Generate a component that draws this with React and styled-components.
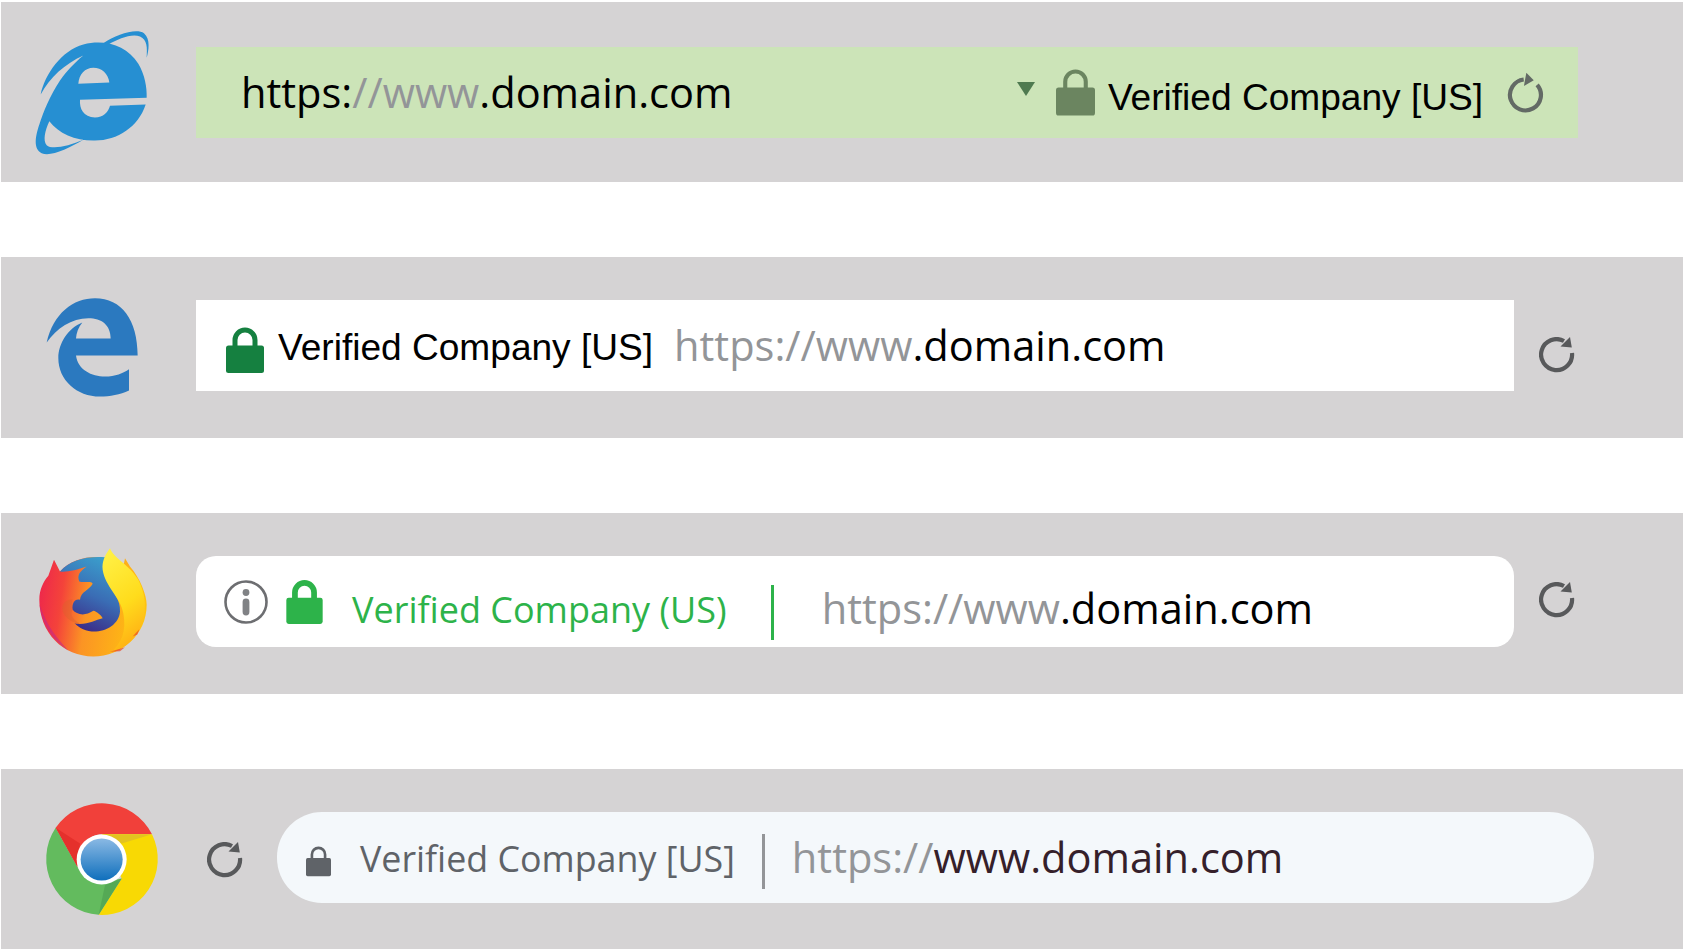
import React from 'react';
import styled, { createGlobalStyle } from 'styled-components';

const GlobalStyle = createGlobalStyle`
  html, body { margin: 0; padding: 0; background: #fff; }
`;

const Page = styled.div`
  display: flex;
  flex-direction: column;
  gap: 75px;
  padding: 1.7px 0 0 1px;
  height: 950px;
  box-sizing: border-box;
  overflow: hidden;
`;

const Bar = styled.div`
  display: flex;
  align-items: flex-start;
  box-sizing: border-box;
  height: 180.7px;
  flex: none;
  padding-top: ${p => p.$top}px;
  background: #d5d3d4;
`;

const LogoBox = styled.svg`
  display: block;
  flex: none;
  align-self: center;
  width: 195px;
  height: 181px;
  margin-top: ${p => -p.$top}px;
`;

const Field = styled.div`
  display: flex;
  align-items: center;
  flex: none;
  box-sizing: border-box;
  height: 91px;
  width: ${p => p.$width}px;
  padding-left: ${p => p.$pad}px;
  background: ${p => p.$bg};
  border-radius: ${p => p.$radius || 0}px;
`;

// $drop moves a centred item down by half its value
const Url = styled.span`
  font: 400 41.55px/1 "Open Sans", sans-serif;
  white-space: nowrap;
  color: ${p => p.$color || '#000'};
  margin-left: ${p => p.$left || 0}px;
  margin-top: ${p => p.$drop || 0}px;
`;

const Dim = styled.span`
  color: #939598;
`;

const Company = styled.span`
  font: 400 37.1px/1 "Liberation Sans", Arial, sans-serif;
  white-space: nowrap;
  color: #000;
  margin-left: ${p => p.$left || 0}px;
  margin-top: ${p => p.$drop || 0}px;
`;

const CompanySoft = styled.span`
  font: 400 ${p => p.$size}px/1 "Open Sans", sans-serif;
  white-space: nowrap;
  color: ${p => p.$color};
  margin-left: ${p => p.$left || 0}px;
  margin-top: ${p => p.$drop || 0}px;
`;

const Divider = styled.span`
  flex: none;
  width: 3px;
  height: 55px;
  margin-left: ${p => p.$left}px;
  margin-top: ${p => p.$drop || 0}px;
  background: ${p => p.$color};
`;

const Caret = styled.span`
  flex: none;
  width: 0;
  height: 0;
  margin-left: auto;
  margin-bottom: 8px;
  margin-top: 2px;
  border-style: solid;
  border-width: 14px 9px 0 9px;
  border-color: #4f7a50 transparent transparent transparent;
`;

const IconSvg = styled.svg`
  display: block;
  flex: none;
  margin-left: ${p => p.$left || 0}px;
  margin-right: ${p => p.$right || 0}px;
  margin-top: ${p => p.$drop || 0}px;
`;

const Spin = styled(IconSvg)`
  transform: rotate(${p => p.$turn || 0}deg);
`;

const Lock = ({ width, height, color, stroke = 5, ...rest }) => (
  <IconSvg viewBox="0 0 38 46" width={width} height={height} {...rest}>
    <path d="M9 20V13a10 10 0 0 1 20 0v7" fill="none" stroke={color} strokeWidth={stroke} />
    <rect x="0" y="18.5" width="38" height="27.5" rx="2.5" fill={color} />
  </IconSvg>
);

const Reload = ({ color = '#58595b', turn, ...rest }) => (
  <Spin viewBox="0 0 36 36" width="36" height="36" $turn={turn} {...rest}>
    <path d="M25 4A15.5 15.5 0 1 0 33 16" fill="none" stroke={color} strokeWidth="4.2" />
    <path d="M31 0L32.8 10.4L21.5 9.4Z" fill={color} />
  </Spin>
);

const InfoIcon = props => (
  <IconSvg viewBox="0 0 44 44" width="44" height="44" {...props}>
    <circle cx="22" cy="22" r="20.5" fill="none" stroke="#6d6e71" strokeWidth="2.6" />
    <circle cx="22" cy="12.5" r="3.4" fill="#808285" />
    <rect x="18.6" y="18.5" width="6.8" height="17" rx="3.4" fill="#808285" />
  </IconSvg>
);

// logos are drawn at 3x inside their slot, traced off the reference
const IeLogo = () => (
  <LogoBox viewBox="3 5 585 542" $top={45}>
    <g fill="#268fd2">
      <path fillRule="evenodd" d="M122 282C135 220 185 150 250 132C315 115 380 135 415 190C435 225 441 260 440 292L240 298C238 325 250 350 285 351C310 351 325 335 330 316L437 312C415 380 350 422 280 420C225 420 175 398 148 362C135 390 128 420 140 434C155 448 205 438 250 418C205 445 150 470 125 458C100 445 105 410 118 372C130 335 150 285 180 240C200 212 225 185 250 165C195 190 150 230 122 282ZM235 250L328 246C325 220 305 202 280 202C255 202 237 222 235 250Z" />
      <path d="M310 128C350 100 410 82 432 98C452 115 446 150 440 172C442 140 442 118 420 108C395 98 355 115 325 132Z" />
    </g>
  </LogoBox>
);

const EdgeLogo = () => (
  <LogoBox viewBox="3 22 585 542" $top={43}>
    <path
      fill="#2b79bf"
      d="M140 278C160 190 220 145 285 145C365 145 413 210 413 317L228 317C233 360 275 380 315 380C345 380 370 370 387 358L387 422C360 435 330 440 300 440C230 440 175 390 175 325C175 280 205 235 247 218C235 232 229 250 228 266L332 266C332 225 305 205 265 205C215 205 170 235 140 278Z"
    />
  </LogoBox>
);

const FirefoxLogo = () => (
  <LogoBox viewBox="3 10 585 542" $top={43}>
    <defs>
      <linearGradient id="fxBody" gradientUnits="userSpaceOnUse" x1="30" y1="170" x2="345" y2="215">
        <stop offset="0" stopColor="#ee2a4a" />
        <stop offset="0.2" stopColor="#f4433a" />
        <stop offset="0.45" stopColor="#fb9424" />
        <stop offset="1" stopColor="#ffc30f" />
      </linearGradient>
      <linearGradient id="fxGlobe" x1="0.75" y1="0.05" x2="0.4" y2="1">
        <stop offset="0" stopColor="#3b9ccb" />
        <stop offset="0.5" stopColor="#3a6db5" />
        <stop offset="1" stopColor="#3c2a86" />
      </linearGradient>
      <linearGradient id="fxFlame" x1="0.3" y1="0" x2="0.6" y2="1">
        <stop offset="0" stopColor="#fff044" />
        <stop offset="0.55" stopColor="#ffdc1c" />
        <stop offset="1" stopColor="#ffab13" />
      </linearGradient>
    </defs>
    <g transform="translate(90 90)">
      <path
        fill="url(#fxBody)"
        d="M55 108L72 60L90 95C120 60 170 48 215 52L280 80L285 55L300 80C330 115 350 165 350 195C350 285 275 350 190 350C100 350 28 280 28 180C28 150 40 125 55 108Z"
      />
      <path
        fill="#c1278f"
        fillOpacity="0.55"
        d="M29 195C36 255 70 305 115 332C85 300 50 260 29 195Z"
      />
      <path
        fill="url(#fxGlobe)"
        d="M90 95C120 60 170 48 225 52L230 120C250 160 272 180 270 215C267 255 225 278 185 275C160 272 140 260 130 245L100 180Z"
      />
      <path
        fill="url(#fxBody)"
        d="M90 95C110 98 140 90 170 80C150 95 140 105 148 125C160 130 185 122 188 132C180 150 152 155 150 180C135 175 125 190 128 210C140 225 165 230 190 213C200 215 212 225 218 235C195 240 175 255 140 252C115 250 95 225 97 200L60 200Z"
      />
      <path
        fill="#d9622e"
        fillOpacity="0.4"
        d="M128 178C110 178 95 190 97 208C100 228 120 248 150 252C130 240 118 225 128 210C124 198 124 188 128 178Z"
      />
      <path
        fill="url(#fxFlame)"
        d="M240 25C250 55 300 75 325 120C345 160 350 200 340 240C325 290 290 325 240 340C275 310 290 275 280 220C270 170 225 140 218 90C215 65 225 45 240 25Z"
      />
      <path fill="#e8452a" fillOpacity="0.7" d="M240 336L285 322L270 334Z" />
      <path fill="#e8452a" fillOpacity="0.7" d="M308 290L328 268L322 284Z" />
    </g>
  </LogoBox>
);

const ChromeLogo = () => (
  <LogoBox viewBox="3 27 585 542" $top={43}>
    <defs>
      <linearGradient id="crBlue" x1="0" y1="0" x2="0" y2="1">
        <stop offset="0" stopColor="#8ab9e4" />
        <stop offset="1" stopColor="#0f6fbc" />
      </linearGradient>
    </defs>
    <path fill="#f1403a" d="M167 203A168 168 0 0 1 456 222L305 222C270 222 240 250 232 320Z" />
    <path fill="#f8d904" d="M456 222A168 168 0 0 1 296 464L365 355L305 222Z" />
    <path fill="#63bb5e" d="M296 464A168 168 0 0 1 167 203L232 320C245 345 300 372 365 355Z" />
    <path fill="#e5302c" d="M167 203L232 320L240 250Z" />
    <path fill="#e3c320" d="M305 222L456 222L365 250Z" />
    <path fill="#55a955" d="M296 464L365 355L315 375Z" />
    <circle cx="305" cy="298" r="75" fill="#fff" />
    <circle cx="305" cy="298" r="63" fill="url(#crBlue)" />
  </LogoBox>
);

const App = () => (
  <>
    <GlobalStyle />
    <Page>
      <Bar $top={45}>
        <IeLogo />
        <Field $width={1382} $pad={45} $bg="#cce4b8">
          <Url $drop={2}>https:<Dim>//www</Dim>.domain.com</Url>
          <Caret />
          <Lock width={39} height={54} color="#6b8560" $left={21} stroke={4} />
          <Company $left={13} $drop={10}>Verified Company [US]</Company>
          <Reload turn={-35} $left={25} $right={34} $drop={6} color="#636a65" />
        </Field>
      </Bar>
      <Bar $top={43}>
        <EdgeLogo />
        <Field $width={1318} $pad={30} $bg="#fff">
          <Lock width={38} height={46} color="#158040" $drop={8} />
          <Company $left={14} $drop={4}>Verified Company [US]</Company>
          <Url $left={21}><Dim>https://www</Dim>.domain.com</Url>
        </Field>
        <Reload $left={25} $drop={37} />
      </Bar>
      <Bar $top={43}>
        <FirefoxLogo />
        <Field $width={1318} $pad={28} $bg="#fff" $radius={20}>
          <InfoIcon />
          <Lock width={39} height={44} color="#2db34a" $left={17} stroke={6} />
          <CompanySoft $size={36} $left={28} $color="#2db34a" $drop={16}>Verified Company (US)</CompanySoft>
          <Divider $left={44} $color="#2db34a" $drop={22} />
          <Url $left={48} $drop={15}><Dim>https://www</Dim>.domain.com</Url>
        </Field>
        <Reload $left={25} $drop={26} />
      </Bar>
      <Bar $top={43}>
        <ChromeLogo />
        <Reload $left={11} $right={34} $drop={30} />
        <Field $width={1317} $pad={29} $bg="#f4f8fb" $radius={45}>
          <Lock width={25} height={32} color="#5f6368" stroke={4} $drop={8} />
          <CompanySoft $size={35.8} $left={29} $color="#5f6368" $drop={4}>Verified Company [US]</CompanySoft>
          <Divider $left={27} $color="#939598" $drop={8} />
          <Url $left={27} $color="#35202a" $drop={2}><Dim>https://</Dim>www.domain.com</Url>
        </Field>
      </Bar>
    </Page>
  </>
);

export default App;
